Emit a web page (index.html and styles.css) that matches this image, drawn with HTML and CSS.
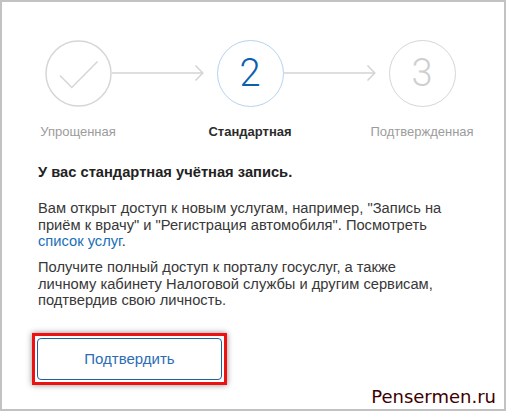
FILE: index.html
```html
<!DOCTYPE html>
<html lang="ru">
<head>
<meta charset="utf-8">
<title>Стандартная учётная запись</title>
<link rel="stylesheet" href="styles.css">
</head>
<body>
<div class="frame">
  <div class="steps">
    <div class="step">
      <div class="circle done">
        <svg width="67" height="67" viewBox="0 0 67 67">
          <circle cx="33.5" cy="33.5" r="32.5" fill="none" stroke="#d6d6d6" stroke-width="1.5"/>
          <polyline points="15,35.5 26.8,47.5 52.5,21.5" fill="none" stroke="#d6d6d6" stroke-width="1.5"/>
        </svg>
      </div>
      <div class="label muted">Упрощенная</div>
    </div>
    <div class="connector">
      <svg width="105" height="18" viewBox="0 0 105 18">
        <line x1="0" y1="9" x2="90.5" y2="9" stroke="#d3d3d3" stroke-width="1.5"/>
        <polyline points="83.5,1.5 90.8,9 83.5,16.5" fill="none" stroke="#d3d3d3" stroke-width="1.5"/>
      </svg>
    </div>
    <div class="step">
      <div class="circle current"><span class="num">2</span></div>
      <div class="label active">Стандартная</div>
    </div>
    <div class="connector">
      <svg width="105" height="18" viewBox="0 0 105 18">
        <line x1="0" y1="9" x2="90.5" y2="9" stroke="#d3d3d3" stroke-width="1.5"/>
        <polyline points="83.5,1.5 90.8,9 83.5,16.5" fill="none" stroke="#d3d3d3" stroke-width="1.5"/>
      </svg>
    </div>
    <div class="step">
      <div class="circle next"><span class="num">3</span></div>
      <div class="label muted">Подтвержденная</div>
    </div>
  </div>

  <div class="content">
    <h2 class="title">У вас стандартная учётная запись.</h2>
    <p class="text">Вам открыт доступ к новым услугам, например, "Запись на приём к врачу" и "Регистрация автомобиля". Посмотреть <a class="link" href="#">список услуг</a>.</p>
    <p class="text">Получите полный доступ к порталу госуслуг, а также личному кабинету Налоговой службы и другим сервисам, подтвердив свою личность.</p>
    <div class="highlight">
      <button class="btn" type="button">Подтвердить</button>
    </div>
  </div>

  <div class="watermark">Pensermen.ru</div>
</div>
</body>
</html>
```

FILE: styles.css
```css
html, body {
  margin: 0;
  padding: 0;
  background: #ffffff;
}

body {
  font-family: "Liberation Sans", Arial, sans-serif;
}

.frame {
  position: relative;
  width: 506px;
  height: 411px;
  box-sizing: border-box;
  border: 2px solid #c2c2c2;
  background: #ffffff;
  overflow: hidden;
}

.steps {
  display: flex;
  align-items: flex-start;
  padding: 37.5px 0 0 42.5px;
}

.step {
  width: 67px;
  display: flex;
  flex-direction: column;
  align-items: center;
}

.circle {
  width: 67px;
  height: 67px;
  box-sizing: border-box;
  border-radius: 50%;
  display: flex;
  align-items: center;
  justify-content: center;
}

.circle.done {
  display: block;
}

.circle.done svg {
  display: block;
}

.circle.current {
  border: 1.5px solid #b6d3ef;
}

.circle.next {
  border: 1.5px solid #d6d6d6;
}

.num {
  font-family: Roboto, "Liberation Sans", sans-serif;
  font-weight: 300;
  font-size: 38px;
  line-height: 1;
  margin-top: 0;
}

.current .num {
  color: #0d5fae;
}

.next .num {
  color: #cfcfcf;
}

.connector {
  width: 105px;
  height: 18px;
  margin-top: 24.5px;
}

.connector svg {
  display: block;
}

.label {
  margin-top: 17px;
  font-size: 13px;
  line-height: 16px;
  white-space: nowrap;
}

.label.muted {
  color: #9c9c9c;
}

.label.active {
  color: #2b2b2b;
  font-weight: bold;
}

.content {
  padding: 24.5px 52px 0 36px;
}

.title {
  margin: 0 0 19px 0;
  font-size: 14.7px;
  line-height: 17px;
  font-weight: bold;
  color: #222222;
}

.text {
  margin: 0 0 9.5px 0;
  font-size: 14.7px;
  line-height: 16.5px;
  color: #383838;
}

.link {
  color: #1a6fb9;
  text-decoration: none;
}

.highlight {
  display: inline-block;
  margin: 14.5px 0 0 -6px;
  border: 3px solid #ee1111;
  padding: 2px;
  box-shadow: 0 0 6px rgba(0, 0, 0, 0.45);
  background: #ffffff;
}

.btn {
  display: block;
  width: 185px;
  height: 42px;
  border: 1px solid #1f5f9f;
  border-radius: 4px;
  background: #ffffff;
  font-family: "Liberation Sans", Arial, sans-serif;
  font-size: 15px;
  color: #2a6db4;
  padding: 0;
}

.watermark {
  position: absolute;
  right: 8px;
  bottom: 1px;
  font-family: "DejaVu Sans", Verdana, sans-serif;
  font-size: 18px;
  line-height: 22px;
  color: #3d0000;
}
```
